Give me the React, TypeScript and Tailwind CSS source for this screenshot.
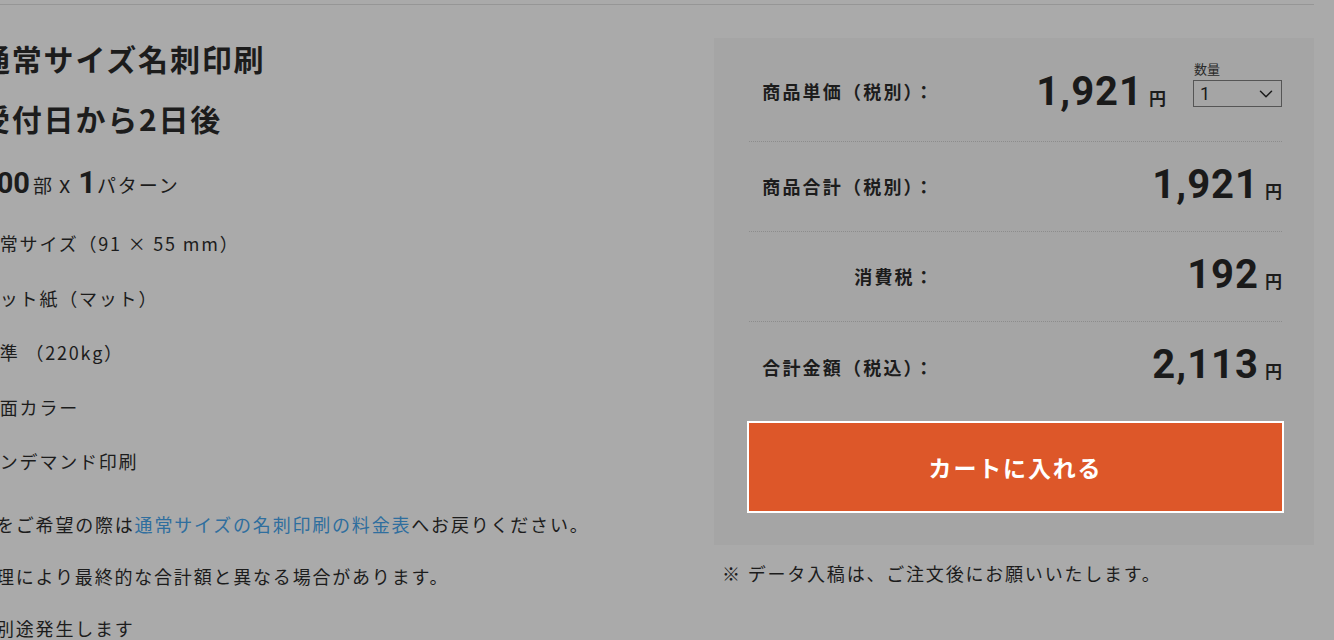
import { ChevronDown } from "lucide-react"

const jp = "font-['Noto_Sans_CJK_JP','Noto_Sans',sans-serif]"
const num = "font-['Roboto','Noto_Sans_CJK_JP',sans-serif]"

const specs = [
  "通常サイズ（91 × 55 mm）",
  "マット紙（マット）",
  "標準 （220kg）",
  "片面カラー",
  "オンデマンド印刷",
]

function PriceRow({
  label,
  value,
  border = true,
  first = false,
  children,
}: {
  label: string
  value: string
  border?: boolean
  first?: boolean
  children?: React.ReactNode
}) {
  return (
    <div
      className={`flex h-[90px] items-center ${border ? "border-b border-dotted border-[#8c8c8c]" : ""}`}
    >
      <div
        className={`w-[186px] text-right text-[18px] font-bold tracking-[2.2px] text-[#1c1c1c] ${first ? "mb-[10px]" : ""}`}
      >
        {label}
      </div>
      <div className={`flex flex-1 items-center justify-end ${first ? "mb-[10px]" : "mb-[4px]"}`}>
        <div className="flex items-baseline">
          <span className={`${num} text-[40px] font-bold leading-none tracking-[1px] text-[#1a1a1a]`}>{value}</span>
          <span className="ml-[6px] text-[17px] font-bold text-[#1c1c1c]">円</span>
        </div>
        {children}
      </div>
    </div>
  )
}

export default function App() {
  return (
    <div className={`${jp} h-[640px] w-[1334px] overflow-hidden bg-[#aaaaaa] text-[#1c1c1c]`}>
      <div className="pt-[4px]">
        <div className="w-[1314px] border-t border-[#969696]" />
      </div>

      <div className="flex">
        {/* left: product details, scrolled slightly past the left edge */}
        <div className="-ml-[20px] w-[734px] shrink-0">
          <h1 className="mt-[33px] text-[30px] font-bold leading-[40px] tracking-[0.06em]">通常サイズ名刺印刷</h1>
          <h2 className="mt-[20px] text-[30px] font-bold leading-[40px] tracking-[0.06em]">受付日から2日後</h2>
          <div className="mt-[25px] flex items-baseline leading-[40px]">
            <span className={`${num} text-[29px] font-bold`}>100</span>
            <span className="ml-[3px] text-[19px] tracking-[0.05em]">部</span>
            <span className={`${num} ml-[6px] text-[18px]`}>X</span>
            <span className={`${num} ml-[8px] text-[31px] font-bold`}>1</span>
            <span className="ml-[1px] text-[19px] tracking-[0.1em]">パターン</span>
          </div>
          <ul>
            {specs.map((s, i) => (
              <li
                key={s}
                className={`${i === 0 ? "mt-[21px]" : "mt-[24.5px]"} text-[18px] leading-[30px] tracking-[0.1em]`}
              >
                {s}
              </li>
            ))}
          </ul>
          <div className="ml-[16px] mt-[33px] space-y-[22px] text-[18px] leading-[30px] tracking-[0.1em]">
            <p>
              をご希望の際は<a href="#" className="text-[#2f6e9e]">通常サイズの名刺印刷の料金表</a>へお戻りください。
            </p>
            <p>理により最終的な合計額と異なる場合があります。</p>
            <p>別途発生します</p>
          </div>
        </div>

        {/* right: price summary */}
        <div className="w-[600px] shrink-0">
          <div className="mt-[33px] bg-[#a5a5a5] pb-[32px] pl-[35px] pr-[32px] pt-[14px]">
            <PriceRow label="商品単価（税別）：" value="1,921" first>
              <div className="relative ml-[27px] mt-[4px]">
                <span className="absolute -top-[19px] left-[1px] text-[13px] leading-[16px] text-[#2a2a2a]">数量</span>
                <div className="flex h-[27px] w-[89px] items-center justify-between border border-[#555555] pl-[6px] pr-[4px]">
                  <span className={`${num} text-[18px] text-[#1a1a1a]`}>1</span>
                  <ChevronDown className="h-[22px] w-[22px] text-[#1a1a1a]" strokeWidth={1.6} />
                </div>
              </div>
            </PriceRow>
            <PriceRow label="商品合計（税別）：" value="1,921" />
            <PriceRow label="消費税：" value="192" />
            <PriceRow label="合計金額（税込）：" value="2,113" border={false} />
            <button className="-mx-[2px] mt-[9px] flex h-[92px] w-[537px] items-center justify-center border-2 border-white bg-[#dd5729] text-[23px] font-bold tracking-[0.08em] text-white">
              カートに入れる
            </button>
          </div>
          <p className="ml-[8px] mt-[13px] text-[18px] leading-[30px] tracking-[0.1em]">
            ※ データ入稿は、ご注文後にお願いいたします。
          </p>
        </div>
      </div>
    </div>
  )
}
